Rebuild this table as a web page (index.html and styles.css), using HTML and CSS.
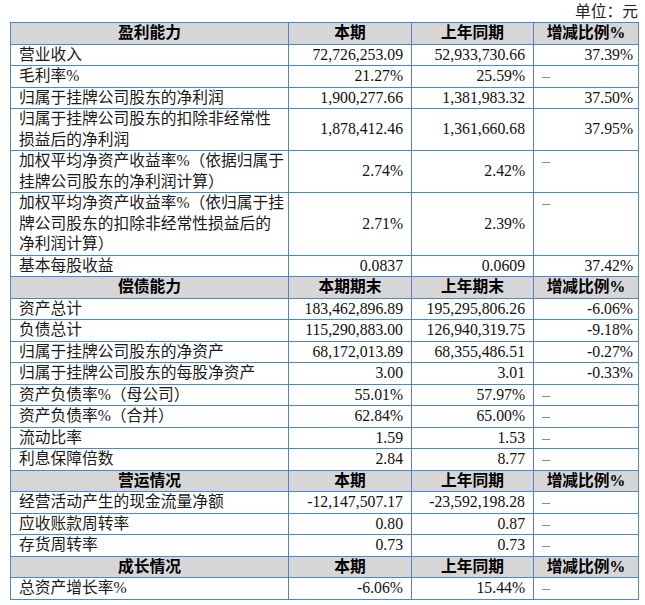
FILE: index.html
```html
<!DOCTYPE html>
<html lang="zh">
<head>
<meta charset="utf-8">
<link rel="stylesheet" href="styles.css">
</head>
<body>
<div class="page">
  <div class="unit">单位：元</div>
  <table class="fin">
    <colgroup>
      <col class="c1"><col class="c2"><col class="c3"><col class="c4">
    </colgroup>
    <tr class="hd"><td>盈利能力</td><td>本期</td><td>上年同期</td><td>增减比例%</td></tr>
    <tr><td class="lbl">营业收入</td><td class="num">72,726,253.09</td><td class="num">52,933,730.66</td><td class="num pct">37.39%</td></tr>
    <tr><td class="lbl">毛利率%</td><td class="num">21.27%</td><td class="num">25.59%</td><td class="dash">–</td></tr>
    <tr><td class="lbl">归属于挂牌公司股东的净利润</td><td class="num">1,900,277.66</td><td class="num">1,381,983.32</td><td class="num pct">37.50%</td></tr>
    <tr><td class="lbl">归属于挂牌公司股东的扣除非经常性<br>损益后的净利润</td><td class="num">1,878,412.46</td><td class="num">1,361,660.68</td><td class="num pct">37.95%</td></tr>
    <tr><td class="lbl">加权平均净资产收益率%（依据归属于<br>挂牌公司股东的净利润计算）</td><td class="num">2.74%</td><td class="num">2.42%</td><td class="dash">–</td></tr>
    <tr><td class="lbl">加权平均净资产收益率%（依归属于挂<br>牌公司股东的扣除非经常性损益后的<br>净利润计算）</td><td class="num">2.71%</td><td class="num">2.39%</td><td class="dash">–</td></tr>
    <tr><td class="lbl">基本每股收益</td><td class="num">0.0837</td><td class="num">0.0609</td><td class="num pct">37.42%</td></tr>
    <tr class="hd"><td>偿债能力</td><td>本期期末</td><td>上年期末</td><td>增减比例%</td></tr>
    <tr><td class="lbl">资产总计</td><td class="num">183,462,896.89</td><td class="num">195,295,806.26</td><td class="num pct">-6.06%</td></tr>
    <tr><td class="lbl">负债总计</td><td class="num">115,290,883.00</td><td class="num">126,940,319.75</td><td class="num pct">-9.18%</td></tr>
    <tr><td class="lbl">归属于挂牌公司股东的净资产</td><td class="num">68,172,013.89</td><td class="num">68,355,486.51</td><td class="num pct">-0.27%</td></tr>
    <tr><td class="lbl">归属于挂牌公司股东的每股净资产</td><td class="num">3.00</td><td class="num">3.01</td><td class="num pct">-0.33%</td></tr>
    <tr><td class="lbl">资产负债率%（母公司）</td><td class="num">55.01%</td><td class="num">57.97%</td><td class="dash">–</td></tr>
    <tr><td class="lbl">资产负债率%（合并）</td><td class="num">62.84%</td><td class="num">65.00%</td><td class="dash">–</td></tr>
    <tr><td class="lbl">流动比率</td><td class="num">1.59</td><td class="num">1.53</td><td class="dash">–</td></tr>
    <tr><td class="lbl">利息保障倍数</td><td class="num">2.84</td><td class="num">8.77</td><td class="dash">–</td></tr>
    <tr class="hd"><td>营运情况</td><td>本期</td><td>上年同期</td><td>增减比例%</td></tr>
    <tr><td class="lbl">经营活动产生的现金流量净额</td><td class="num">-12,147,507.17</td><td class="num">-23,592,198.28</td><td class="dash">–</td></tr>
    <tr><td class="lbl">应收账款周转率</td><td class="num">0.80</td><td class="num">0.87</td><td class="dash">–</td></tr>
    <tr><td class="lbl">存货周转率</td><td class="num">0.73</td><td class="num">0.73</td><td class="dash">–</td></tr>
    <tr class="hd"><td>成长情况</td><td>本期</td><td>上年同期</td><td>增减比例%</td></tr>
    <tr><td class="lbl">总资产增长率%</td><td class="num">-6.06%</td><td class="num">15.44%</td><td class="dash">–</td></tr>
  </table>
</div>
</body>
</html>
```

FILE: styles.css
```css
html, body {
  margin: 0;
  padding: 0;
  background: #ffffff;
}

body {
  font-family: "Liberation Serif", "Noto Sans CJK SC", serif;
  font-size: 15.75px;
  color: #111111;
}

.page {
  padding: 2px 0 0 10px;
  width: 628px;
}

.unit {
  text-align: right;
  line-height: 20px;
  height: 20px;
  color: #222222;
}

.fin {
  border-collapse: collapse;
  table-layout: fixed;
  width: 628px;
}

.c1 { width: 278px; }
.c2 { width: 123px; }
.c3 { width: 122px; }
.c4 { width: 105px; }

.fin td {
  border: 1px solid #4d86cf;
  padding: 0 8px;
  line-height: 20.5px;
  vertical-align: middle;
  white-space: nowrap;
}

.fin .hd td {
  background: #d6d6d6;
  font-weight: 700;
  text-align: center;
  color: #000000;
}

.fin .lbl {
  text-align: left;
  color: #1a1a1a;
}

.fin .num {
  text-align: right;
}

.fin .pct {
  padding-right: 5px;
}

.fin .dash {
  vertical-align: top;
  color: #8a8a8a;
  text-align: left;
}
```
